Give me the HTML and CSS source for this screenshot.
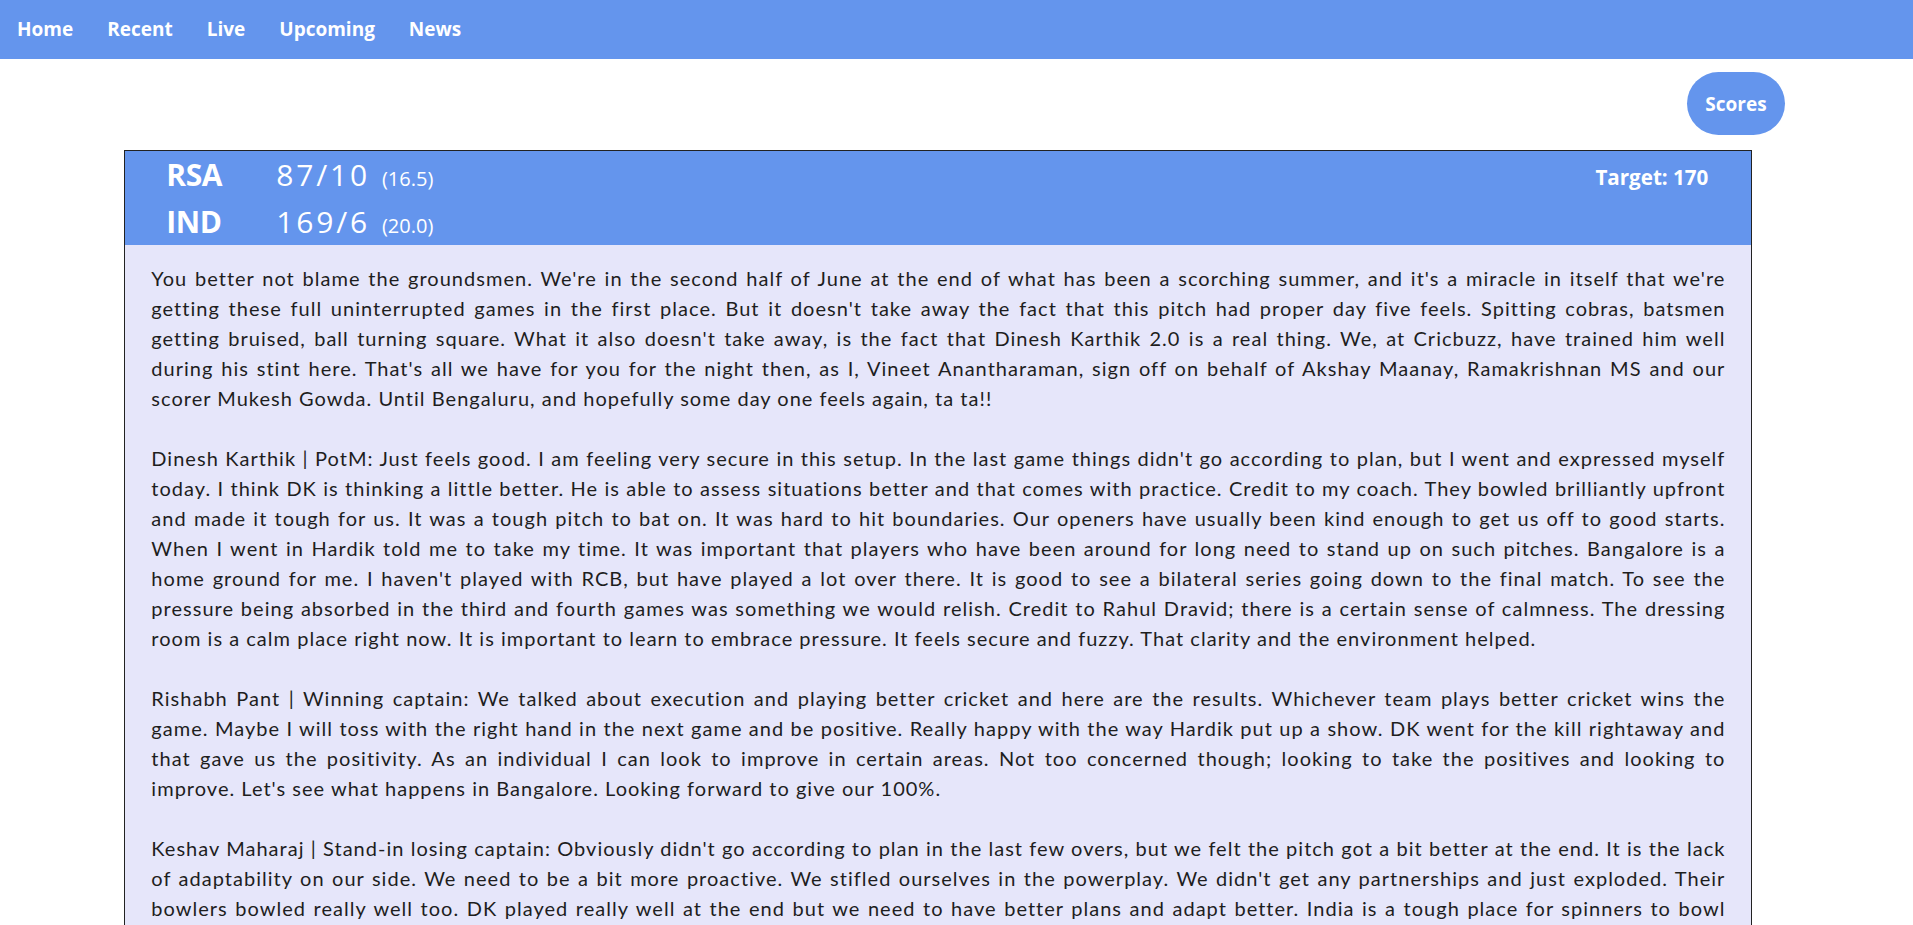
FILE: index.html
```html
<!DOCTYPE html>
<html lang="en">
<head>
<meta charset="utf-8">
<title>Scores</title>
<link rel="stylesheet" href="styles.css">
</head>
<body>
<nav class="topnav">
  <a class="nav-link" href="#">Home</a>
  <a class="nav-link" href="#">Recent</a>
  <a class="nav-link" href="#">Live</a>
  <a class="nav-link" href="#">Upcoming</a>
  <a class="nav-link" href="#">News</a>
</nav>
<div class="toolbar">
  <button class="scores-btn">Scores</button>
</div>
<section class="match">
  <header class="match-head">
    <div class="innings">
      <div class="inn-row"><span class="team">RSA</span><span class="runs">87/10</span><span class="overs">(16.5)</span></div>
      <div class="inn-row"><span class="team">IND</span><span class="runs">169/6</span><span class="overs">(20.0)</span></div>
    </div>
    <div class="target">Target: 170</div>
  </header>
  <div class="commentary">
    <p>You better not blame the groundsmen. We're in the second half of June at the end of what has been a scorching summer, and it's a miracle in itself that we're getting these full uninterrupted games in the first place. But it doesn't take away the fact that this pitch had proper day five feels. Spitting cobras, batsmen getting bruised, ball turning square. What it also doesn't take away, is the fact that Dinesh Karthik 2.0 is a real thing. We, at Cricbuzz, have trained him well during his stint here. That's all we have for you for the night then, as I, Vineet Anantharaman, sign off on behalf of Akshay Maanay, Ramakrishnan MS and our scorer Mukesh Gowda. Until Bengaluru, and hopefully some day one feels again, ta ta!!</p>
    <p>Dinesh Karthik | PotM: Just feels good. I am feeling very secure in this setup. In the last game things didn't go according to plan, but I went and expressed myself today. I think DK is thinking a little better. He is able to assess situations better and that comes with practice. Credit to my coach. They bowled brilliantly upfront and made it tough for us. It was a tough pitch to bat on. It was hard to hit boundaries. Our openers have usually been kind enough to get us off to good starts. When I went in Hardik told me to take my time. It was important that players who have been around for long need to stand up on such pitches. Bangalore is a home ground for me. I haven't played with RCB, but have played a lot over there. It is good to see a bilateral series going down to the final match. To see the pressure being absorbed in the third and fourth games was something we would relish. Credit to Rahul Dravid; there is a certain sense of calmness. The dressing room is a calm place right now. It is important to learn to embrace pressure. It feels secure and fuzzy. That clarity and the environment helped.</p>
    <p>Rishabh Pant | Winning captain: We talked about execution and playing better cricket and here are the results. Whichever team plays better cricket wins the game. Maybe I will toss with the right hand in the next game and be positive. Really happy with the way Hardik put up a show. DK went for the kill rightaway and that gave us the positivity. As an individual I can look to improve in certain areas. Not too concerned though; looking to take the positives and looking to improve. Let's see what happens in Bangalore. Looking forward to give our 100%.</p>
    <p>Keshav Maharaj | Stand-in losing captain: Obviously didn't go according to plan in the last few overs, but we felt the pitch got a bit better at the end. It is the lack of adaptability on our side. We need to be a bit more proactive. We stifled ourselves in the powerplay. We didn't get any partnerships and just exploded. Their bowlers bowled really well too. DK played really well at the end but we need to have better plans and adapt better. India is a tough place for spinners to bowl consistently, but we will come back stronger in Bangalore.</p>
  </div>
</section>
</body>
</html>
```
FILE: styles.css
```css
html, body {
  margin: 0;
  padding: 0;
  background: #ffffff;
}
body {
  font-family: "Open Sans", "Noto Sans", sans-serif;
}
.topnav {
  display: flex;
  align-items: center;
  height: 59px;
  background: #6495ed;
}
.nav-link {
  color: #ffffff;
  text-decoration: none;
  font-weight: 700;
  font-size: 19px;
  padding: 0 17px;
  line-height: 59px;
  margin-top: -1px;
}
.toolbar {
  display: flex;
  justify-content: flex-end;
  padding: 13px 128px 15px 0;
}
.scores-btn {
  width: 98px;
  height: 63px;
  border: none;
  border-radius: 32px;
  background: #6495ed;
  color: #ffffff;
  font-family: "Open Sans", sans-serif;
  font-weight: 700;
  font-size: 19px;
  padding: 0;
}
.match {
  width: 85%;
  margin-left: 6.5%;
  border: 1px solid #222;
  background: #e6e6fa;
}
.match-head {
  display: flex;
  justify-content: space-between;
  background: #6495ed;
  color: #ffffff;
  padding: 0 43px 0 41px;
}
.inn-row {
  display: flex;
  align-items: baseline;
  height: 47px;
  line-height: 47px;
}
.team {
  width: 110px;
  font-weight: 700;
  font-size: 30px;
  letter-spacing: -0.5px;
}
.runs {
  font-size: 30px;
  letter-spacing: 2.8px;
  margin-right: 12px;
}
.overs {
  font-size: 20px;
}
.target {
  font-weight: 700;
  font-size: 20.6px;
  line-height: 47px;
  padding-top: 3px;
}
.commentary {
  padding: 18px 26px 30px 26px;
  font-family: "Lato", "Open Sans", sans-serif;
  font-size: 20px;
  line-height: 30px;
  letter-spacing: 1.02px;
  color: #1e1e1e;
  text-align: justify;
}
.commentary p {
  margin: 0 0 30px 0;
}
```
